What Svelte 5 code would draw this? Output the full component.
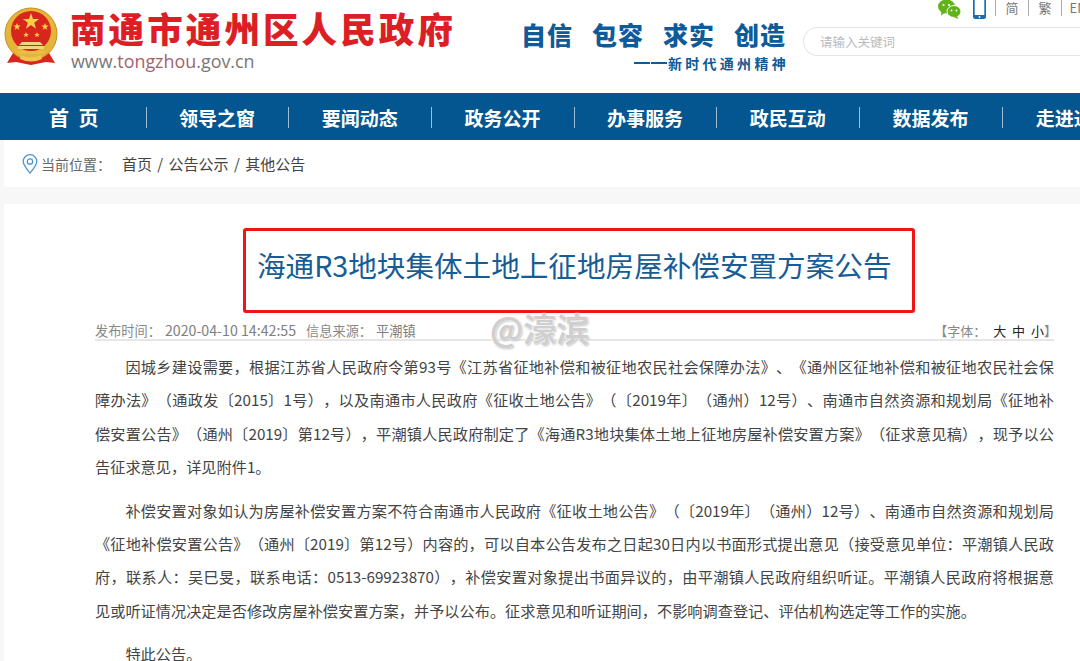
<script>
  const navItems = ['首 页', '领导之窗', '要闻动态', '政务公开', '办事服务', '政民互动', '数据发布', '走进通州'];
  const slogans = ['自信', '包容', '求实', '创造'];
  // line breaks follow the original page
  const paragraphs = [
    [
      '因城乡建设需要，根据江苏省人民政府令第93号《江苏省征地补偿和被征地农民社会保障办法》、《通州区征地补偿和被征地农民社会保',
      '障办法》（通政发〔2015〕1号），以及南通市人民政府《征收土地公告》（〔2019年〕（通州）12号）、南通市自然资源和规划局《征地补',
      '偿安置公告》（通州〔2019〕第12号），平潮镇人民政府制定了《海通R3地块集体土地上征地房屋补偿安置方案》（征求意见稿），现予以公',
      '告征求意见，详见附件1。'
    ],
    [
      '补偿安置对象如认为房屋补偿安置方案不符合南通市人民政府《征收土地公告》（〔2019年〕（通州）12号）、南通市自然资源和规划局',
      '《征地补偿安置公告》（通州〔2019〕第12号）内容的，可以自本公告发布之日起30日内以书面形式提出意见（接受意见单位：平潮镇人民政',
      '府，联系人：吴巳旻，联系电话：0513-69923870），补偿安置对象提出书面异议的，由平潮镇人民政府组织听证。平潮镇人民政府将根据意',
      '见或听证情况决定是否修改房屋补偿安置方案，并予以公布。征求意见和听证期间，不影响调查登记、评估机构选定等工作的实施。'
    ],
    ['特此公告。']
  ];
</script>

<div class="page">
  <header class="header">
    <div class="logo">
      <svg class="emblem" viewBox="0 0 54 60" width="54" height="60">
        <path d="M9 46 L3 56 L12 55 L27 58 L42 55 L51 56 L45 46 Z" fill="#d9261c" />
        <circle cx="27" cy="27" r="26" fill="#e5b53a" />
        <circle cx="27" cy="27" r="26" fill="none" stroke="#c98f1e" stroke-width="1" />
        <circle cx="27" cy="24" r="20" fill="#d9261c" />
        <path d="M27 6 l2 6 h6.200 l-5 3.700 1.900 6 -5.100 -3.700 -5.100 3.700 1.900 -6 -5 -3.700 h6.200 z" fill="#f6cf4a" />
        <path d="M13 16 l1 2.600 h2.700 l-2.200 1.600 .8 2.700 -2.300 -1.600 -2.300 1.600 .8 -2.700 -2.200 -1.600 h2.700 z" fill="#f6cf4a" />
        <path d="M41 16 l1 2.600 h2.700 l-2.200 1.600 .8 2.700 -2.300 -1.600 -2.300 1.600 .8 -2.700 -2.200 -1.600 h2.700 z" fill="#f6cf4a" />
        <path d="M22 25 l.8 2 h2.100 l-1.700 1.300 .6 2 -1.800 -1.200 -1.800 1.200 .6 -2 -1.700 -1.300 h2.100 z" fill="#f6cf4a" />
        <path d="M33 25 l.8 2 h2.100 l-1.700 1.300 .6 2 -1.800 -1.200 -1.800 1.200 .6 -2 -1.700 -1.300 h2.100 z" fill="#f6cf4a" />
        <path d="M18 35 h18 l3 3 h-24 z M14 39 h26 v3 h-26 z" fill="#f4d67a" />
        <path d="M12 44 h30 l-3 3 h-24 z" fill="#e9bd4a" />
        <path d="M17 48 q10 5 20 0 l1 4 q-11 5 -22 0 z" fill="#f0c44e" />
      </svg>
      <div class="logo-text">
        <div class="site-name">南通市通州区人民政府</div>
        <div class="site-url">www.<span class="url-mid">tongzhou</span>.gov.cn</div>
      </div>
    </div>

    <div class="slogan">
      <div class="slogan-main">
        {#each slogans as word}
          <span>{word}</span>
        {/each}
      </div>
      <div class="slogan-sub"><i class="dash"></i><i class="dash"></i>新时代通州精神</div>
    </div>

    <div class="tools">
      <div class="tool-row">
        <svg class="wechat" viewBox="0 0 23 19" width="23" height="19">
          <ellipse cx="8.500" cy="6.500" rx="8.500" ry="7" fill="#62b31a" />
          <path d="M3.500 11 L3 15.500 L8 12 Z" fill="#62b31a" />
          <ellipse cx="16" cy="11.500" rx="7" ry="6" fill="#62b31a" stroke="#fff" stroke-width="1" />
          <path d="M19 16 L20.500 19 L15.500 17 Z" fill="#62b31a" />
          <circle cx="5.500" cy="5" r="1.100" fill="#fff" />
          <circle cx="11" cy="5" r="1.100" fill="#fff" />
          <circle cx="13.500" cy="10.500" r=".9" fill="#fff" />
          <circle cx="18.500" cy="10.500" r=".9" fill="#fff" />
        </svg>
        <svg class="phone" viewBox="0 0 13 19" width="13" height="19">
          <rect x="0" y="-2" width="13" height="21" rx="2.500" fill="#1a6cb4" />
          <rect x="1.700" y="0" width="9.600" height="15" fill="#fff" />
          <circle cx="6.500" cy="17" r=".9" fill="#fff" />
        </svg>
        <span class="lang">简</span>
        <span class="lang">繁</span>
        <span class="lang">EN</span>
      </div>
      <div class="search">请输入关键词</div>
    </div>
  </header>

  <nav class="nav">
    {#each navItems as item}
      <div class="nav-item"><span>{item}</span></div>
    {/each}
  </nav>

  <div class="crumb">
    <svg class="pin" viewBox="0 0 16 20" width="16" height="20">
      <path d="M8 19 C4 14 1.200 11 1.200 7.500 A6.800 6.800 0 0 1 14.800 7.500 C14.800 11 12 14 8 19 Z" fill="none" stroke="#4b97d2" stroke-width="1.300" />
      <circle cx="8" cy="7.500" r="2.700" fill="none" stroke="#4b97d2" stroke-width="1.300" />
    </svg>
    <span class="crumb-label">当前位置：</span>
    <span class="crumb-path">首页 / 公告公示 / 其他公告</span>
  </div>

  <main class="article">
    <div class="title-box">
      <h1>海通R3地块集体土地上征地房屋补偿安置方案公告</h1>
    </div>

    <div class="meta">
      <span class="meta-left"><span>发布时间：</span><b class="stamp">2020-04-10 14:42:55</b><span>信息来源：</span><b class="src">平潮镇</b></span>
      <span class="meta-right">【字体：<b>大 中 小</b>】</span>
    </div>

    <div class="watermark">@濠滨</div>

    <div class="body-text">
      {#each paragraphs as para}
        <p>
          {#each para as line}
            <span class="line">{line}</span>
          {/each}
        </p>
      {/each}
    </div>
  </main>
</div>

<style>
  :global(body) {
    margin: 0;
    background: #f7f7f7;
    overflow: hidden;
  }

  .page {
    height: 661px;
    overflow: hidden;
    font-family: "Noto Sans CJK SC", "Noto Sans", sans-serif;
    color: #444;
    position: relative;
    text-spacing-trim: space-all;
  }

  .header {
    height: 93px;
    background: #fff;
    display: flex;
    position: relative;
  }

  .logo {
    display: flex;
    width: 522px;
    padding: 7px 0 0 4px;
    box-sizing: border-box;
  }

  .emblem {
    flex: none;
  }

  .logo-text {
    margin-left: 12px;
  }

  .site-name {
    font-size: 35.500px;
    line-height: 42px;
    font-weight: 900;
    letter-spacing: 3.100px;
    color: #dc1f25;
    white-space: nowrap;
  }

  .site-url {
    font-family: "Open Sans", sans-serif;
    font-size: 17.900px;
    line-height: 24px;
    color: #777;
    margin-left: 1px;
  }

  .url-mid {
    color: #a5606e;
  }

  .slogan {
    width: 264px;
    padding-top: 18px;
    color: #0f5a98;
  }

  .slogan-main {
    display: flex;
    justify-content: space-between;
    font-size: 25px;
    line-height: 32px;
    font-weight: 900;
    letter-spacing: 1px;
    margin-left: -1px;
  }

  .slogan-sub {
    display: flex;
    align-items: center;
    justify-content: flex-end;
    font-size: 14px;
    line-height: 20px;
    font-weight: 700;
    letter-spacing: 3.300px;
    margin-top: 3px;
    margin-right: -3px;
  }

  .dash {
    width: 16px;
    height: 2px;
    margin-right: 1px;
    background: #0f5a98;
  }

  .tools {
    margin-left: 17px;
    flex: 1;
    min-width: 0;
    position: relative;
    overflow: hidden;
  }

  .tool-row {
    display: flex;
    align-items: flex-start;
    height: 27px;
    padding-left: 135px;
  }

  .wechat {
    margin-right: 12px;
    flex: none;
  }

  .phone {
    margin-right: 9px;
    flex: none;
  }

  .lang {
    flex: none;
    width: 32px;
    height: 16px;
    border-left: 1px solid #a9a9a9;
    text-align: center;
    font-size: 13px;
    line-height: 15px;
    color: #777;
  }

  .search {
    width: 320px;
    height: 29px;
    box-sizing: border-box;
    border: 1px solid #e6e6e6;
    border-right: none;
    border-radius: 15px 0 0 15px;
    padding-left: 16px;
    font-size: 12.500px;
    line-height: 27px;
    color: #bbb;
  }

  .nav {
    height: 47px;
    background: #03568f;
    display: flex;
    padding-left: 4px;
    overflow: hidden;
  }

  .nav-item {
    flex: 0 0 142.700px;
    height: 21px;
    margin-top: 14px;
    box-sizing: border-box;
    border-right: 1px solid #9fbdd3;
    display: flex;
    align-items: center;
    justify-content: center;
    font-size: 19px;
    font-weight: 700;
    color: #fff;
    white-space: nowrap;
  }

  .nav-item span {
    margin-left: -1px;
  }

  .nav-item:first-child span {
    font-size: 20px;
    word-spacing: 5px;
    margin-left: -2px;
  }

  .nav-item:last-child {
    border-right: none;
  }

  .crumb {
    height: 47px;
    margin-left: 4px;
    background: #fff;
    display: flex;
    align-items: center;
    padding-left: 18px;
    font-size: 14px;
  }

  .pin {
    flex: none;
    margin-right: 3px;
  }

  .crumb-label {
    color: #666;
    width: 81px;
  }

  .crumb-path {
    color: #444;
    font-size: 15px;
    word-spacing: 2px;
  }

  .article {
    margin: 17px 0 0 4px;
    background: #fff;
    height: 460px;
    padding: 24px 26px 0 91px;
    position: relative;
  }

  .title-box {
    width: 672px;
    height: 85px;
    box-sizing: border-box;
    margin-left: 148px;
    border: 3px solid #f01414;
    border-radius: 3px;
    padding: 11px 0 0 11px;
  }

  h1 {
    margin: 0;
    font-size: 28.600px;
    line-height: 46px;
    font-weight: 400;
    color: #165c96;
    white-space: nowrap;
  }

  .meta {
    display: flex;
    justify-content: space-between;
    margin-top: 7px;
    height: 21px;
    box-sizing: border-box;
    border-bottom: 2px solid #e6e6e6;
    font-size: 13.200px;
    line-height: 21px;
    color: #888;
    white-space: pre;
  }

  .meta b {
    font-weight: 400;
    color: #808080;
  }

  .meta .stamp {
    font-size: 14.200px;
    margin: 0 10px 0 4px;
  }

  .meta .src {
    margin-left: 4px;
  }

  .meta-right {
    font-size: 13px;
    margin-right: -3px;
  }

  .meta-right b {
    color: #222;
    margin: 0 0 0 7px;
    font-size: 13px;
    word-spacing: 3px;
  }

  .watermark {
    position: absolute;
    left: 486px;
    top: 104px;
    font-size: 33px;
    line-height: 40px;
    font-weight: 700;
    color: #cfcfcf;
    text-shadow: 0 0 2px #fff, 0 0 2px #fff, 1px 1px 2px #aaa;
  }

  .body-text {
    padding-top: 9px;
  }

  .body-text p {
    margin: 0 0 10.500px;
    font-size: 15.200px;
    line-height: 33.300px;
    color: #444;
  }

  .line {
    display: block;
    text-align: justify;
    text-align-last: justify;
  }

  .line:first-child {
    text-indent: 30.400px;
  }

  .line:last-child {
    text-align-last: left;
  }
</style>
